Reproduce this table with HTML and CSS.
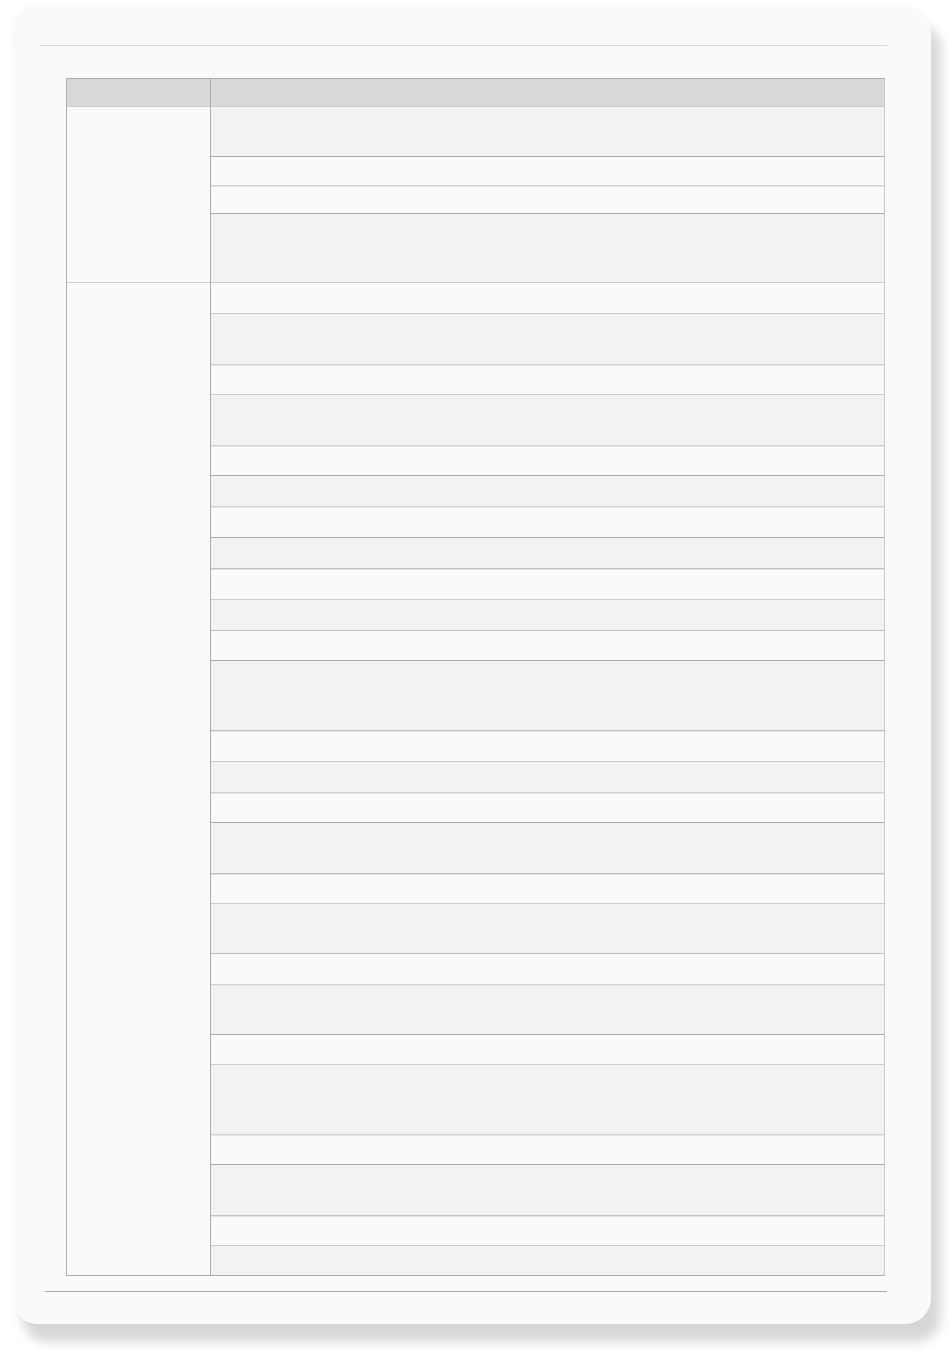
FILE: index.html
```html
<!DOCTYPE html>
<html lang="en">
<head>
    <meta charset="UTF-8">
    <meta name="viewport" content="width=device-width, initial-scale=1.0">
    <title>Sheet</title>
    <link rel="stylesheet" href="styles.css">
</head>
<body>
    <div class="card">
        <div class="rule-top"></div>

        <div class="sheet">
            <div class="head">
                <div class="head-label"></div>
                <div class="head-rest"></div>
            </div>

            <!-- group 1 -->
            <div class="group">
                <div class="group-label"></div>
                <div class="group-rows">
                    <div class="row light h50 shade"></div>
                    <div class="row dark h29"></div>
                    <div class="row soft h28"></div>
                    <div class="row dark h69 shade"></div>
                </div>
            </div>

            <!-- group 2 -->
            <div class="group">
                <div class="group-label"></div>
                <div class="group-rows">
                    <div class="row light h31"></div>
                    <div class="row light h51 shade"></div>
                    <div class="row soft h30"></div>
                    <div class="row light h51 shade"></div>
                    <div class="row soft h30"></div>
                    <div class="row dark h31 shade"></div>
                    <div class="row soft h31"></div>
                    <div class="row dark h31 shade"></div>
                    <div class="row soft-mid h31"></div>
                    <div class="row light h31 shade"></div>
                    <div class="row mid h30"></div>
                    <div class="row dark h70 shade"></div>
                    <div class="row soft-mid h31"></div>
                    <div class="row light h31 shade"></div>
                    <div class="row soft h30"></div>
                    <div class="row dark h51 shade"></div>
                    <div class="row soft-mid h30"></div>
                    <div class="row light h50 shade"></div>
                    <div class="row mid h31"></div>
                    <div class="row soft h50 shade"></div>
                    <div class="row dark h30"></div>
                    <div class="row light h70 shade"></div>
                    <div class="row soft h30"></div>
                    <div class="row dark h51 shade"></div>
                    <div class="row soft-mid h30"></div>
                    <div class="row light h30 shade"></div>
                </div>
            </div>
        </div>

        <div class="rule-bottom"></div>
    </div>
</body>
</html>
```

FILE: styles.css
```css
html, body {
    background-color: #ffffff;
}
body {
    margin: 0;
    padding: 5px 0 45px 12px;
    font-family: "Liberation Sans", Arial, sans-serif;
}
.card {
    width: 919px;
    height: 1319px;
    padding-top: 40px;
    box-sizing: border-box;
    background-color: #fafafa;
    border-radius: 26px;
    box-shadow: 10px 18px 12px rgba(0, 0, 0, 0.16);
}
.rule-top {
    margin: 0 44px 0 28px;
    border-top: 1px solid #d8d8d8;
}
.rule-bottom {
    margin: 15px 44px 0 33px;
    border-top: 1px solid #aaaaaa;
}
.sheet {
    width: 819px;
    margin: 32px 0 0 54px;
    box-sizing: border-box;
    border: 1px solid #aaaaaa;
    border-right-color: #c8c8c8;
    border-left-color: #b0b0b0;
}
.head {
    display: flex;
    height: 27px;
    background-color: #d9d9d9;
}
.head-label {
    width: 143px;
    border-right: 1px solid #aaaaaa;
}
.head-rest {
    flex: 1;
}
.group {
    display: flex;
}
.group-label {
    width: 143px;
    border-top: 1px solid #cccccc;
    border-right: 1px solid #aaaaaa;
    background-color: #fafafa;
}
.group-rows {
    flex: 1;
}
.row {
    box-sizing: border-box;
    background-color: #fafafa;
    border-top: 1px solid #cccccc;
}
.row.shade {
    background-color: #f2f2f2;
}
.dark {
    border-top-color: #aaaaaa;
}
.mid {
    border-top-color: #bdbdbd;
}
.light {
    border-top-color: #cccccc;
}
.soft {
    border-top-color: #d0d0d0;
    box-shadow: inset 0 1px 0 #e6e6e6;
}
.soft-mid {
    border-top-color: #c2c2c2;
    box-shadow: inset 0 1px 0 #e2e2e2;
}
.h28 { height: 28px; }
.h29 { height: 29px; }
.h30 { height: 30px; }
.h31 { height: 31px; }
.h50 { height: 50px; }
.h51 { height: 51px; }
.h69 { height: 69px; }
.h70 { height: 70px; }
```
